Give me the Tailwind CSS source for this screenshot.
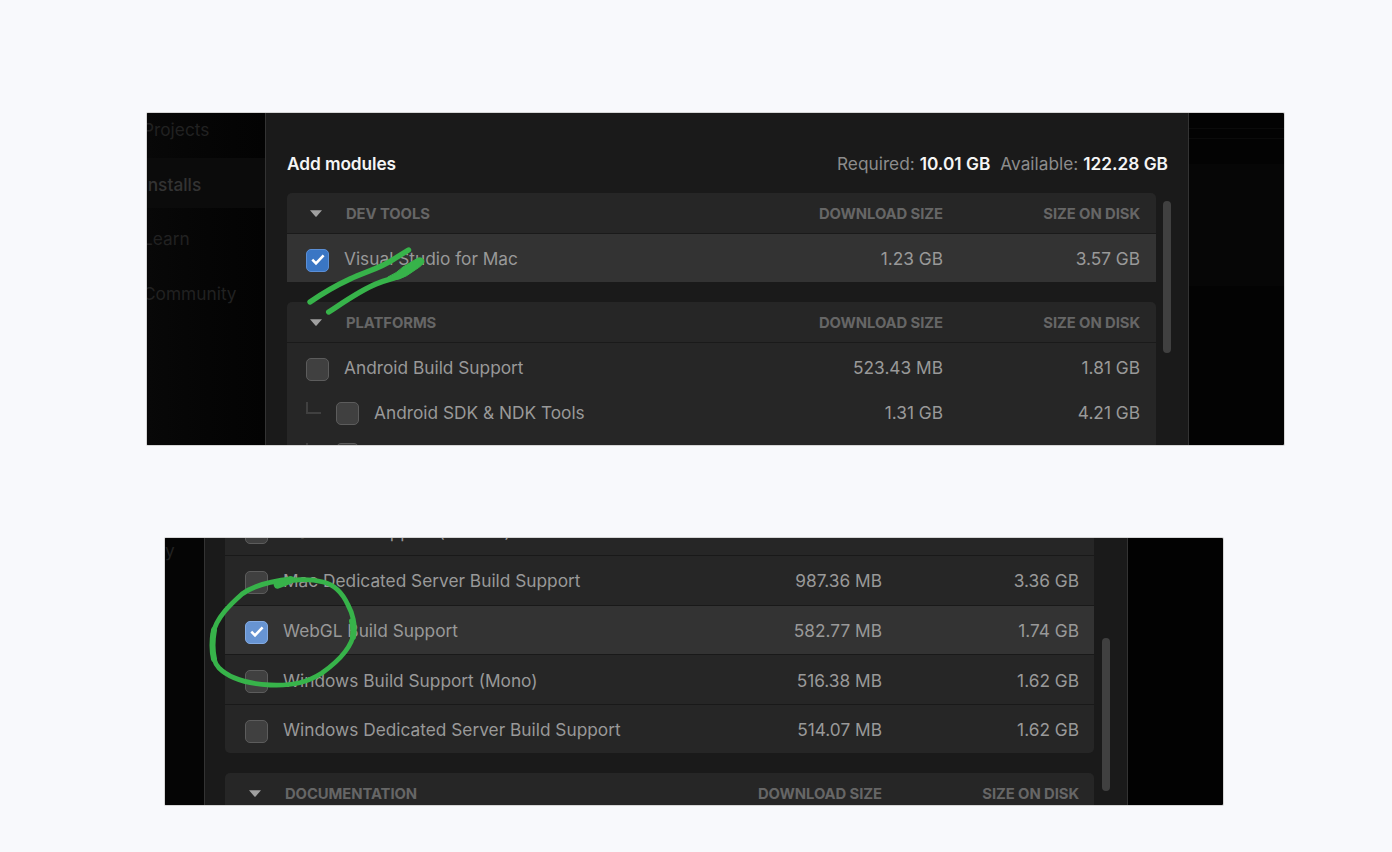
<!DOCTYPE html>
<html lang="en">
<head>
<meta charset="utf-8">
<title>Add modules</title>
<script src="https://cdn.jsdelivr.net/npm/@tailwindcss/browser@4"></script>
</head>
<body class="relative h-[852px] w-[1392px] overflow-hidden bg-[#f8f9fc] font-['Inter',sans-serif] text-[17.3px] leading-[22px] text-[#999999] antialiased">
<svg class="hidden">
  <symbol id="caret" viewBox="0 0 12 7"><path d="M0 .3h12L6.8 6.2a1 1 0 0 1-1.6 0z" fill="#a0a0a0"/></symbol>
  <symbol id="check" viewBox="0 0 14 12"><path d="M1.3 5.6 5 9.300 12.600 1.400" fill="none" stroke="#fff" stroke-width="2.600"/></symbol>
</svg>

<!-- Dev tools and platforms -->
<section class="ml-[147px] mt-[113px] flex h-[331.5px] w-[1137px] overflow-hidden rounded-[1px] bg-[#030303] shadow-[0_0_0_1px_#d6d6d6]">
  <nav class="h-full w-[118px] shrink-0 overflow-hidden whitespace-nowrap bg-linear-to-r from-[#080808] to-[#030303] text-[#212121]">
    <div class="-ml-[4px] flex h-[45px] items-start pt-[6px]">Projects</div>
    <div class="flex h-[50px] items-center bg-[#0b0b0b] pt-[3px] font-medium text-[#333333]"><span class="-ml-[4px]">Installs</span></div>
    <div class="-ml-[4px] flex h-[55px] items-center pt-[7px]">Learn</div>
    <div class="-ml-[4px] flex h-[55px] items-center pt-[7px]">Community</div>
  </nav>
  <main class="flex h-full w-[924px] shrink-0 flex-col overflow-hidden border-x border-[#333333] bg-[#1a1a1a] pl-[21px]">
    <header class="flex h-[80px] shrink-0 items-start justify-between pr-[20px] pt-[40px]">
      <h1 class="font-semibold tracking-[-0.08px] text-[#f5f5f5]">Add modules</h1>
      <div class="flex gap-[10px] text-[#8c8c8c]"><span>Required: <b class="font-semibold text-[#f5f5f5]">10.01 GB</b></span><span>Available: <b class="font-semibold text-[#f5f5f5]">122.28 GB</b></span></div>
    </header>
    <div class="flex">
      <div class="w-[869px] shrink-0">
        <div class="overflow-hidden rounded-t-[5px] bg-[#262626]">
          <div class="flex h-[41px] items-center border-b border-[#1a1a1a] pr-[16px] pt-[1px] text-[14.8px] font-bold tracking-[-0.07px] text-[#666666]">
            <svg class="ml-[23px] mr-[24px] h-[7px] w-[12px]"><use href="#caret"/></svg>
            <span class="flex-1">DEV TOOLS</span><span class="w-[160px] text-right">DOWNLOAD SIZE</span><span class="w-[197px] text-right">SIZE ON DISK</span>
          </div>
          <div class="flex h-[48px] items-center bg-[#333333] pr-[16px] pt-[2px]">
            <span class="ml-[19px] mr-[15px] mt-[2px] flex size-[23px] items-center justify-center rounded-[5px] border border-[#5b8fd6] bg-[#3a76c4]"><svg class="h-[12px] w-[14px]"><use href="#check"/></svg></span>
            <span class="flex-1">Visual Studio for Mac</span><span class="w-[160px] text-right">1.23 GB</span><span class="w-[197px] text-right">3.57 GB</span>
          </div>
        </div>
        <div class="mt-[20px] overflow-hidden rounded-t-[5px] bg-[#262626]">
          <div class="flex h-[41px] items-center border-b border-[#1a1a1a] pr-[16px] pt-[1px] text-[14.8px] font-bold tracking-[-0.07px] text-[#666666]">
            <svg class="ml-[23px] mr-[24px] h-[7px] w-[12px]"><use href="#caret"/></svg>
            <span class="flex-1">PLATFORMS</span><span class="w-[160px] text-right">DOWNLOAD SIZE</span><span class="w-[197px] text-right">SIZE ON DISK</span>
          </div>
          <div class="flex h-[48px] items-center pr-[16px] pt-[2px]">
            <span class="ml-[19px] mr-[15px] mt-[2px] size-[23px] rounded-[5px] border border-[#5c5c5c] bg-[#404040]"></span>
            <span class="flex-1">Android Build Support</span><span class="w-[160px] text-right">523.43 MB</span><span class="w-[197px] text-right">1.81 GB</span>
          </div>
          <div class="flex h-[42px] items-center pr-[16px] pt-[2px]">
            <span class="ml-[19px] mr-[15px] h-[12px] w-[15px] -translate-y-[5px] border-b-2 border-l-2 border-[#404040]"></span>
            <span class="mr-[15px] size-[23px] rounded-[5px] border border-[#5c5c5c] bg-[#404040]"></span>
            <span class="flex-1">Android SDK &amp; NDK Tools</span><span class="w-[160px] text-right">1.31 GB</span><span class="w-[197px] text-right">4.21 GB</span>
          </div>
          <div class="flex h-[48px] items-start">
            <span class="ml-[19px] mr-[15px] mt-[10px] h-[12px] w-[15px] border-b-2 border-l-2 border-[#404040]"></span>
            <span class="mt-[10px] size-[23px] rounded-[5px] border border-[#5c5c5c] bg-[#404040]"></span>
          </div>
        </div>
      </div>
      <div class="ml-[7px] mt-[8px] h-[152px] w-[8px] rounded-full bg-[#404040]"></div>
    </div>
  </main>
  <aside class="flex flex-1 flex-col">
    <div class="mt-[15px] h-[11px] border-y border-[#0b0b0b]"></div>
    <div class="mt-[25px] h-[122px] bg-[#060606]"></div>
  </aside>
</section>

<!-- Platforms and documentation -->
<section class="ml-[165px] mt-[93.5px] flex h-[267px] w-[1058px] overflow-hidden rounded-[1px] bg-[#020202] shadow-[0_0_0_1px_#d6d6d6]">
  <nav class="h-full w-[39px] shrink-0 bg-[#050505] pt-[2px] text-[#222222]">y</nav>
  <main class="flex h-full w-[924px] shrink-0 overflow-hidden border-x border-[#333333] bg-[#1a1a1a] pl-[20px]">
    <div class="w-[869px] shrink-0">
      <div class="overflow-hidden rounded-b-[5px] bg-[#262626]">
        <div class="flex h-[18px] items-end border-b border-[#191919] pr-[15px]">
          <span class="mb-[11px] ml-[20px] mr-[15px] size-[23px] shrink-0 rounded-[5px] border border-[#5c5c5c] bg-[#404040]"></span>
          <span class="mb-[12px] flex-1">Mac Build Support (IL2CPP)</span>
        </div>
        <div class="flex h-[50px] items-center border-b border-[#191919] pr-[15px] pt-[1px]">
          <span class="ml-[20px] mr-[15px] mt-[2px] size-[23px] rounded-[5px] border border-[#5c5c5c] bg-[#404040]"></span>
          <span class="flex-1">Mac Dedicated Server Build Support</span><span class="w-[160px] text-right">987.36 MB</span><span class="w-[197px] text-right">3.36 GB</span>
        </div>
        <div class="flex h-[49px] items-center border-b border-[#191919] bg-[#333333] pr-[15px] pt-[2px]">
          <span class="ml-[20px] mr-[15px] mt-[2px] flex size-[23px] items-center justify-center rounded-[5px] border border-[#84abe2] bg-[#6794d2]"><svg class="h-[12px] w-[14px]"><use href="#check"/></svg></span>
          <span class="flex-1">WebGL Build Support</span><span class="w-[160px] text-right">582.77 MB</span><span class="w-[197px] text-right">1.74 GB</span>
        </div>
        <div class="flex h-[50px] items-center border-b border-[#191919] pr-[15px] pt-[2px]">
          <span class="ml-[20px] mr-[15px] mt-[2px] size-[23px] rounded-[5px] border border-[#5c5c5c] bg-[#404040]"></span>
          <span class="flex-1">Windows Build Support (Mono)</span><span class="w-[160px] text-right">516.38 MB</span><span class="w-[197px] text-right">1.62 GB</span>
        </div>
        <div class="flex h-[48px] items-center pr-[15px] pt-[2px]">
          <span class="ml-[20px] mr-[15px] mt-[2px] size-[23px] rounded-[5px] border border-[#5c5c5c] bg-[#404040]"></span>
          <span class="flex-1">Windows Dedicated Server Build Support</span><span class="w-[160px] text-right">514.07 MB</span><span class="w-[197px] text-right">1.62 GB</span>
        </div>
      </div>
      <div class="mt-[20px] flex h-[41px] items-center rounded-t-[5px] bg-[#262626] pr-[15px] text-[14.8px] font-bold tracking-[-0.07px] text-[#666666]">
        <svg class="ml-[24px] mr-[24px] h-[7px] w-[12px]"><use href="#caret"/></svg>
        <span class="flex-1">DOCUMENTATION</span><span class="w-[160px] text-right">DOWNLOAD SIZE</span><span class="w-[197px] text-right">SIZE ON DISK</span>
      </div>
    </div>
    <div class="ml-[8px] mt-[100px] h-[153px] w-[8px] rounded-full bg-[#404040]"></div>
  </main>
</section>

<!-- Hand-drawn annotations -->
<svg class="pointer-events-none absolute inset-0 h-[852px] w-[1392px]" viewBox="0 0 1392 852" fill="none" stroke="#37b34a" stroke-linecap="round" stroke-linejoin="round">
  <path stroke-width="5.4" d="M310 302C323 293 335 286 350 279S381 268 394 259Q402 254 408.500 250"/>
  <path stroke-width="5.400" d="M328.700 312C344 302 361 290 376 284S390 280 399 276L421 261"/>
  <path stroke-width="1" fill="#37b34a" d="M388 277Q397 273 403 267L418 258Q424 257 424 262Q423 265 415 270Q406 277 399 279Q392 280 388 281z"/>
  <path stroke-width="4.800" d="M277 585C289 578 311 579 323 582C336 585 343 594 348 605C353 614 355 625 354 632C352 648 336 663 322 673C308 682 294 686 270 685C252 684 231 680 219 668C211 660 212 644 213 634C216 617 233 602 242 594C254 585 272 581 292 579"/>
  <path stroke-width="7.500" d="M277.500 585Q284 583 290 580"/>
  <path stroke-width="6" d="M214 630Q211 646 214 659M352 621Q354 627 353 637"/>
</svg>
</body>
</html>
